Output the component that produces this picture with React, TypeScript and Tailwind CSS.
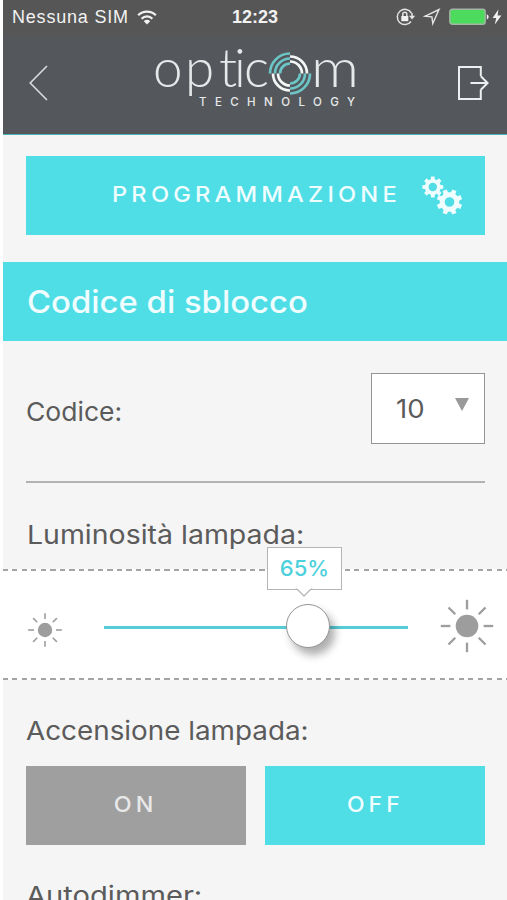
import React from "react";

interface GearProps {
	cx: number;
	cy: number;
	outer: number;
	inner: number;
	hole: number;
	offset: number;
}

const SANS = "font-[Inter,'Liberation_Sans',sans-serif]";

// Eight toothed gear with a round hole
const gearPath = ({ cx, cy, outer, inner, hole, offset }: GearProps) => {
	const steps: [number, number][] = [
		[-14, inner],
		[-10, outer],
		[10, outer],
		[14, inner],
	];
	const points: string[] = [];
	for (let i = 0; i < 8; i++) {
		for (const [deg, r] of steps) {
			const a = ((i * 45 + offset + deg) * Math.PI) / 180;
			points.push(
				`${(cx + r * Math.cos(a)).toFixed(2)} ${(cy + r * Math.sin(a)).toFixed(2)}`
			);
		}
	}
	return `M${points.join("L")}Z M${cx - hole} ${cy}a${hole} ${hole} 0 1 0 ${hole * 2} 0a${hole} ${hole} 0 1 0 ${-hole * 2} 0Z`;
};

const GearsIcon = () => (
	<svg width="42" height="42" viewBox="0 0 42 42" fill="#effdff" fillRule="evenodd">
		<path d={gearPath({ cx: 12.8, cy: 12, outer: 10.6, inner: 8, hole: 4.2, offset: 0 })} />
		<path d={gearPath({ cx: 29.5, cy: 27, outer: 12.9, inner: 9.8, hole: 4.8, offset: 22.5 })} />
	</svg>
);

interface SunProps {
	size: number;
	disc: number;
	from: number;
	to: number;
	stroke: number;
}

const SunIcon: React.FC<SunProps> = ({ size, disc, from, to, stroke }) => (
	<svg width={size} height={size} viewBox={`${-size / 2} ${-size / 2} ${size} ${size}`}>
		<circle r={disc} fill="#9d9d9d" />
		{[0, 45, 90, 135, 180, 225, 270, 315].map((deg) => (
			<line
				key={deg}
				x1={from}
				x2={to}
				y1="0"
				y2="0"
				stroke="#9d9d9d"
				strokeWidth={stroke}
				transform={`rotate(${deg})`}
			/>
		))}
	</svg>
);

const Logo = () => (
	<svg className="overflow-visible" width="210" height="62" viewBox="150 48 210 62" fill="#e6e8ea">
		<g fontFamily="Lato, sans-serif" fontWeight="300" fontSize="53">
			<text x="154 186 220 235 245" y="87">
				optic
			</text>
			<text x="312" y="87" textLength="48" lengthAdjust="spacingAndGlyphs">
				m
			</text>
		</g>
		<g fill="none" strokeWidth="2.7" transform="translate(1 0.5)">
			<g stroke="#6cc5c6">
				<path d="M270 73A20 20 0 0 1 290 53M275 73A15 15 0 0 1 290 58M280 73A10 10 0 0 1 290 63" />
				<path d="M310 73A20 20 0 0 1 290 93M305 73A15 15 0 0 1 290 88M300 73A10 10 0 0 1 290 83" />
			</g>
			<g stroke="#f5f6f6">
				<path d="M290 56A17 17 0 0 1 307 73M290 61A12 12 0 0 1 302 73" />
				<path d="M290 90A17 17 0 0 1 273 73M290 85A12 12 0 0 1 278 73" />
			</g>
		</g>
		<text
			x="200"
			y="106"
			textLength="156"
			fontFamily="Inter, sans-serif"
			fontWeight="500"
			fontSize="11.5"
		>
			TECHNOLOGY
		</text>
	</svg>
);

const StatusBar = () => (
	<div className="relative flex h-[34px] items-center justify-between pl-[9px] pr-[5px] text-[18px] text-[#f2f2f2] font-['Liberation_Sans',sans-serif]">
		<div className="flex items-center gap-[8px]">
			<span className="tracking-[0.8px]">Nessuna SIM</span>
			<svg width="20" height="15" viewBox="0 0 20 15" fill="none" stroke="#f2f2f2" strokeWidth="2.3">
				<path d="M1.2 5.3a12.4 12.4 0 0 1 17.6 0M4.6 8.7a7.6 7.6 0 0 1 10.8 0" />
				<path d="M10 14.4l-3.2-3.2a4.5 4.5 0 0 1 6.4 0z" fill="#f2f2f2" stroke="none" />
			</svg>
		</div>
		<span className="absolute left-[229px] text-[18px] font-bold">12:23</span>
		<div className="flex items-center">
			<svg width="20" height="18" viewBox="0 0 20 18" fill="none" stroke="#e4e4e4" strokeWidth="1.5">
				<path d="M15.4 5A7.6 7.6 0 1 0 15 13.5" />
				<path d="M16 5v4" />
				<path d="M13 7.8h6.2L16.1 11.4z" fill="#e4e4e4" stroke="none" />
				<rect x="5.3" y="8" width="7" height="5.2" fill="#f2f2f2" stroke="none" />
				<path d="M6.8 8V6.3a2 2 0 0 1 4 0V8" />
			</svg>
			<svg className="ml-[7px]" width="18" height="18" viewBox="0 0 18 18" fill="none" stroke="#e4e4e4" strokeWidth="1.4">
				<path d="M1.8 8.3L16 1.5L9.8 15.5L8.9 8.8z" strokeLinejoin="miter" />
			</svg>
			<svg className="ml-[8px]" width="41" height="18" viewBox="0 0 41 18">
				<rect x="0.8" y="1.3" width="35.4" height="15" rx="2.5" fill="#4cdb5d" stroke="#a3b5a5" strokeWidth="1.4" />
				<path d="M37.8 6.3c2.4.8 2.4 4.4 0 5.2z" fill="#f2f2f2" />
			</svg>
			<svg className="ml-[2px]" width="10" height="16" viewBox="0 0 10 16" fill="#f2f2f2">
				<path d="M6.4.5L.6 9h3.6l-1.4 6.5L9.4 6.6H5.6z" />
			</svg>
		</div>
	</div>
);

const Header = () => (
	<header className="h-[135px] border-b-[1.5px] border-[#48b4ba] bg-gradient-to-b from-[#565656] from-25% to-[#54585c] to-30%">
		<StatusBar />
		<div className="flex h-[99px] items-start justify-between pl-[25px] pr-[18px]">
			<svg className="mt-[31px]" width="20" height="36" viewBox="0 0 20 36" fill="none" stroke="#d9dcde" strokeWidth="1.6">
				<path d="M19 1L2.2 18L19 35" />
			</svg>
			<div className="mt-[14px] ml-[2px]">
				<Logo />
			</div>
			<svg className="mt-[31px]" width="32" height="36" viewBox="0 0 32 36" fill="none" stroke="#eceeef" strokeWidth="2">
				<path d="M23.8 11V2H2v32h21.8v-9.5" />
				<path d="M13.5 18H30.5M23.8 11.2L30.6 18L23.8 24.8" />
			</svg>
		</div>
	</header>
);

const DashedLine = () => (
	<div className="h-[2px] bg-[repeating-linear-gradient(90deg,#a4a4a4_0_5px,transparent_5px_9.5px)]" />
);

const BrightnessSlider = () => (
	<section className="relative h-[111px] bg-white">
		<DashedLine />
		<div className="flex h-[107px] items-center pl-[24px] pr-[12px]">
			<div className="mt-[10px] flex">
				<SunIcon size={36} disc={7.2} from={11} to={16.8} stroke={1.6} />
			</div>
			<div className="relative ml-[41px] mt-[6px] h-[3px] w-[304px] bg-[#56cdd6]">
				<div className="absolute left-[182px] top-[-22px] size-[44px] rounded-full border-[1.5px] border-[#959595] bg-white shadow-[5px_7px_9px_rgba(0,0,0,0.32)]" />
				<div className="absolute left-[163px] top-[-79px] flex h-[43px] w-[75px] items-center justify-center border-[1.5px] border-[#b5b5b5] bg-white">
					<span className="mb-[2px] text-[22px] font-medium leading-none text-[#4dd0dc]">
						65%
					</span>
					<svg className="absolute left-[27px] top-[40px]" width="18" height="10" viewBox="0 0 18 10">
						<path d="M1 0L9 8L17 0" fill="#fff" stroke="#b5b5b5" strokeWidth="1.3" />
						<path d="M1.5 0h15" stroke="#fff" strokeWidth="2" />
					</svg>
				</div>
			</div>
			<div className="ml-[31px] mt-[2px] flex">
				<SunIcon size={56} disc={11.3} from={16.6} to={26.2} stroke={2.3} />
			</div>
		</div>
		<DashedLine />
	</section>
);

export default function App() {
	return (
		<div className={`h-[900px] w-[507px] overflow-hidden bg-white pl-[3px] text-[#5b5b5b] ${SANS}`}>
			<div className="h-full bg-[#f5f5f5]">
				<Header />

				<div className="pl-[23px] pr-[22px] pt-[21px]">
					<button className="flex h-[79px] w-full items-center bg-[#4fdee6] pl-[86px] text-[22px] font-medium text-[#effdff]">
						<span className="mb-[2px] w-[308px] origin-left scale-x-[1.075] whitespace-nowrap text-left tracking-[3.9px]">
							PROGRAMMAZIONE
						</span>
						<GearsIcon />
					</button>
				</div>

				<h2 className="mt-[27px] flex h-[79px] items-center bg-[#4fdee6] pl-[24px] pt-[1px] text-[31px] font-medium text-[#effdff]">
					<span className="origin-left scale-x-[1.06]">Codice di sblocco</span>
				</h2>

				{/* Unlock code */}
				<div className="ml-[23px] mr-[22px] flex h-[142px] justify-between border-b-2 border-[#b2b2b2] pt-[32px] text-[26px]">
					<span className="mt-[19px] h-[39px] origin-left scale-x-[1.02]">Codice:</span>
					<div className="flex h-[71px] w-[114px] justify-between border-[1.5px] border-[#959595] bg-white pl-[24px] pr-[15px]">
						<span className="mt-[15px] h-[39px] origin-left scale-x-[1.06]">10</span>
						<svg className="mt-[24px]" width="14" height="13" viewBox="0 0 14 13" fill="#999">
							<path d="M0 0h14L7 13z" />
						</svg>
					</div>
				</div>

				<div className="h-[86px] pl-[24px] pt-[32px] text-[26px]">
					<span className="inline-block origin-left scale-x-[1.095]">Luminosità lampada:</span>
				</div>
				<BrightnessSlider />

				<div className="pl-[23px] pr-[22px] pt-[31px]">
					<div className="text-[26px] leading-[39px]">
						<span className="inline-block origin-left scale-x-[1.07]">Accensione lampada:</span>
					</div>
					<div className="mt-[16px] flex gap-[19px] text-[22px] font-medium tracking-[4px]">
						<button className="h-[79px] flex-1 bg-[#9f9f9f] pb-[2px] text-[#e8e8e8]">
							<span className="inline-block scale-x-[1.06]">ON</span>
						</button>
						<button className="h-[79px] flex-1 bg-[#4fdee6] pb-[2px] text-[#effdff]">
							<span className="inline-block scale-x-[1.04]">OFF</span>
						</button>
					</div>
					<div className="mt-[31px] text-[26px] leading-[39px]">
						<span className="inline-block origin-left scale-x-[1.12]">Autodimmer:</span>
					</div>
				</div>
			</div>
		</div>
	);
}
